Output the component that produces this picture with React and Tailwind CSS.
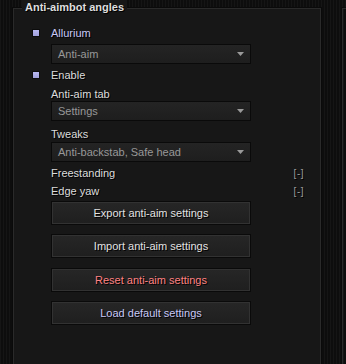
import React from 'react';

const shadow = '[text-shadow:1px_1px_0_#000]';

function Checkbox() {
  return (
    <div className="flex h-[14px] w-[19px] shrink-0 items-center">
      <div className="h-[8px] w-[8px] border border-[#0c0c0c] bg-[linear-gradient(180deg,#b8b8f0_0%,#a0a0dc_100%)]" />
    </div>
  );
}

function Label({ children, className = '' }) {
  return <div className={`flex h-[14px] items-center pl-[19px] text-[#dcdcdc] ${shadow} ${className}`}>{children}</div>;
}

function Dropdown({ value, className = '' }) {
  return (
    <div className={`ml-[19px] flex h-[20px] w-[200px] items-center justify-between border border-[#0a0a0a] bg-[linear-gradient(180deg,#242424_0%,#1e1e1e_100%)] pl-[6px] pr-[6px] ${className}`}>
      <span className="text-[#989898]">{value}</span>
      <svg width="7" height="4" viewBox="0 0 7 4">
        <path d="M0 0h7L3.5 4z" fill="#9a9a9a" />
      </svg>
    </div>
  );
}

function Button({ children, color, className = '' }) {
  return (
    <div className={`ml-[19px] h-[24px] w-[200px] border border-[#0a0a0a] ${className}`}>
      <div className={`flex h-full w-full items-center justify-center border border-[#323232] bg-[linear-gradient(180deg,#262626_0%,#1f1f1f_100%)] ${color} ${shadow}`}>
        {children}
      </div>
    </div>
  );
}

function Hotkey() {
  return <span className={`text-[10px] tracking-[0.5px] text-[#9c9c9c] ${shadow}`}>[-]</span>;
}

export default function App() {
  return (
    <div
      className="flex h-[364px] w-[346px] overflow-hidden bg-[#111111] bg-[repeating-linear-gradient(90deg,#151515_0px,#151515_1px,#0d0d0d_1px,#0d0d0d_3px)] pl-[12px] pt-[7px] text-[11px] leading-[13px]"
      style={{ fontFamily: '"Liberation Sans", Arial, sans-serif' }}
    >
      <div className="relative h-[400px] w-[310px] shrink-0 border border-[#0a0a0a]">
        <div className="h-full w-full border border-[#2a2a2a] bg-[#171717]">
          <div className={`absolute -top-[8px] left-[9px] bg-[#171717] px-[3px] text-[11px] font-bold leading-[14px] text-[#dedede] ${shadow}`}>
            Anti-aimbot angles
          </div>
          <div className="flex flex-col pl-[18px] pt-[17px]">
            <div className="flex h-[14px] items-center">
              <Checkbox />
              <span className={`text-[#c8c8f6] ${shadow}`}>Allurium</span>
            </div>
            <Dropdown value="Anti-aim" className="mt-[4px]" />
            <div className="mt-[4px] flex h-[14px] items-center">
              <Checkbox />
              <span className={`text-[#dcdcdc] ${shadow}`}>Enable</span>
            </div>
            <Label className="mt-[5px]">Anti-aim tab</Label>
            <Dropdown value="Settings" />
            <Label className="mt-[6px]">Tweaks</Label>
            <Dropdown value="Anti-backstab, Safe head" className="mt-[1px]" />
            <div className="mt-[4px] flex h-[14px] items-center justify-between pl-[19px] pr-[16px]">
              <span className={`text-[#dcdcdc] ${shadow}`}>Freestanding</span>
              <Hotkey />
            </div>
            <div className="mt-[4px] flex h-[14px] items-center justify-between pl-[19px] pr-[16px]">
              <span className={`text-[#dcdcdc] ${shadow}`}>Edge yaw</span>
              <Hotkey />
            </div>
            <Button color="text-[#e2e2e2]" className="mt-[3px]">Export anti-aim settings</Button>
            <Button color="text-[#e2e2e2]" className="mt-[9px]">Import anti-aim settings</Button>
            <Button color="text-[#ff8282]" className="mt-[10px]">Reset anti-aim settings</Button>
            <Button color="text-[#c8c8f6]" className="mt-[9px]">Load default settings</Button>
          </div>
        </div>
      </div>
      <div className="ml-[19px] h-[400px] w-[40px] shrink-0 border border-[#0a0a0a]">
        <div className="h-full w-full border-l border-t border-[#2a2a2a] bg-[#111111] bg-[repeating-linear-gradient(90deg,#151515_0px,#151515_1px,#0d0d0d_1px,#0d0d0d_3px)]" />
      </div>
    </div>
  );
}
